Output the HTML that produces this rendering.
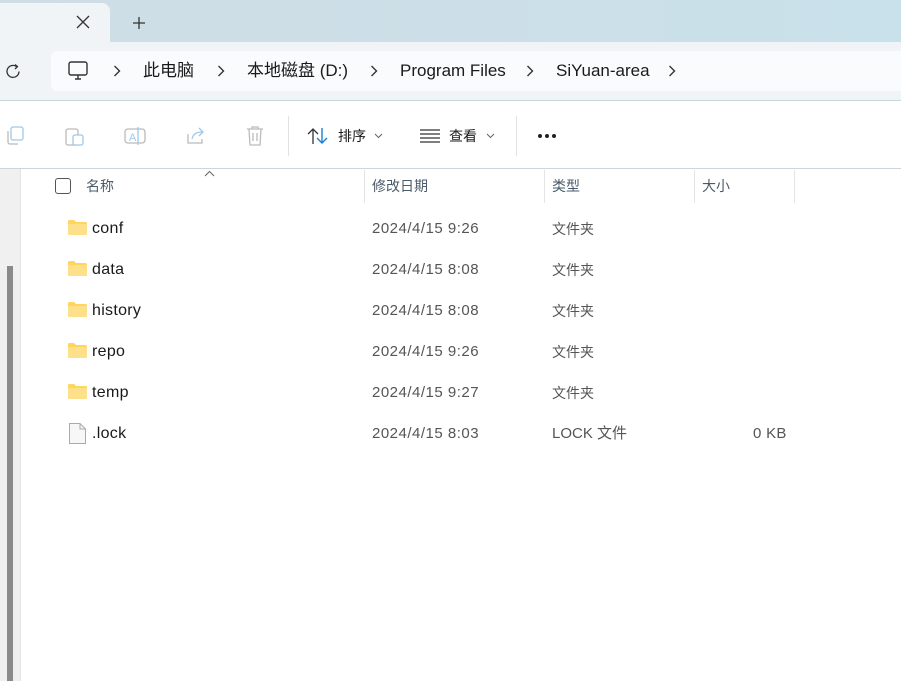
<!DOCTYPE html>
<html><head><meta charset="utf-8"><style>
*{margin:0;padding:0;box-sizing:border-box}
body{width:901px;height:681px;overflow:hidden;background:#fff;font-family:"Liberation Sans","Noto Sans CJK SC",sans-serif;position:relative;color:#1a1a1a}
.abs{position:absolute}
.t{position:absolute;white-space:nowrap;line-height:20px;height:20px}
.n{font-size:16px;letter-spacing:0.3px}
.d{font-size:15px;color:#555;letter-spacing:0.5px}
.c{font-size:14px;color:#555}
</style></head><body>
<div class="abs" style="left:0;top:0;width:901px;height:42px;background:linear-gradient(90deg,#cfdde5,#c9e1ea)"></div>
<div class="abs" style="left:0;top:3px;width:110px;height:40px;background:#f0f4f7;border-radius:0 8px 0 0"></div>
<svg class="abs" style="left:76px;top:15px" width="14" height="14"><path d="M1 1L13 13M13 1L1 13" stroke="#333" stroke-width="1.3"/></svg>
<svg class="abs" style="left:132px;top:16px" width="14" height="14"><path d="M7 1V13M1 7H13" stroke="#333" stroke-width="1.3"/></svg>
<div class="abs" style="left:0;top:42px;width:901px;height:59px;background:#f0f4f7;border-bottom:1px solid #c9d6dc"></div>
<svg class="abs" style="left:5px;top:63px" width="17" height="17"><path d="M14 8.5A6 6 0 1 1 11.5 3.5" fill="none" stroke="#333" stroke-width="1.3"/><path d="M10 1.5L12.5 3.5L10 6" fill="none" stroke="#333" stroke-width="1.3"/></svg>
<div class="abs" style="left:51px;top:51px;width:860px;height:40px;background:#f9fbfc;border-radius:6px"></div>
<svg class="abs" style="left:68px;top:61px" width="20" height="20"><rect x="1" y="1" width="18" height="13" rx="2" fill="none" stroke="#333" stroke-width="1.4"/><path d="M7 18H13M10 14V18" stroke="#333" stroke-width="1.4"/></svg>
<svg class="abs" style="left:113px;top:65px" width="8" height="12"><path d="M1.5 1L6.5 6L1.5 11" fill="none" stroke="#333" stroke-width="1.4"/></svg>
<div class="t" style="left:143px;top:61px;font-size:17px">此电脑</div>
<svg class="abs" style="left:217px;top:65px" width="8" height="12"><path d="M1.5 1L6.5 6L1.5 11" fill="none" stroke="#333" stroke-width="1.4"/></svg>
<div class="t" style="left:247px;top:61px;font-size:17px">本地磁盘 (D:)</div>
<svg class="abs" style="left:370px;top:65px" width="8" height="12"><path d="M1.5 1L6.5 6L1.5 11" fill="none" stroke="#333" stroke-width="1.4"/></svg>
<div class="t" style="left:400px;top:61px;font-size:17px">Program Files</div>
<svg class="abs" style="left:526px;top:65px" width="8" height="12"><path d="M1.5 1L6.5 6L1.5 11" fill="none" stroke="#333" stroke-width="1.4"/></svg>
<div class="t" style="left:556px;top:61px;font-size:17px">SiYuan-area</div>
<svg class="abs" style="left:668px;top:65px" width="8" height="12"><path d="M1.5 1L6.5 6L1.5 11" fill="none" stroke="#333" stroke-width="1.4"/></svg>
<!-- toolbar icons -->
<svg class="abs" style="left:5px;top:126px" width="20" height="20"><rect x="6" y="1" width="12" height="13" rx="2" fill="none" stroke="#9fc8e8" stroke-width="1.3"/><path d="M3 5V16a2 2 0 0 0 2 2H13" fill="none" stroke="#bbb" stroke-width="1.3"/></svg>
<svg class="abs" style="left:65px;top:126px" width="20" height="20"><rect x="1" y="3" width="12" height="16" rx="2" fill="none" stroke="#bbb" stroke-width="1.3"/><rect x="8" y="9" width="10" height="10" rx="2" fill="#fff" stroke="#9fc8e8" stroke-width="1.3"/></svg>
<svg class="abs" style="left:124px;top:126px" width="22" height="20"><rect x="1" y="3" width="20" height="14" rx="3" fill="none" stroke="#bbb" stroke-width="1.3"/><text x="5" y="15" font-size="11" fill="#9fc8e8" font-family="Liberation Sans">A</text><path d="M14 1V19" stroke="#9fc8e8" stroke-width="1.3"/></svg>
<svg class="abs" style="left:185px;top:126px" width="22" height="20"><path d="M3 8V17H17V13" fill="none" stroke="#bbb" stroke-width="1.3"/><path d="M7 13C8 8 12 6 17 6M14 2L18 6L14 10" fill="none" stroke="#9fc8e8" stroke-width="1.3"/></svg>
<svg class="abs" style="left:245px;top:125px" width="20" height="22"><path d="M2 4H18M7 4V2H13V4M4 4L5 20H15L16 4M8 8V16M12 8V16" fill="none" stroke="#bbb" stroke-width="1.3"/></svg>
<div class="abs" style="left:288px;top:116px;width:1px;height:40px;background:#e2e2e2"></div>
<svg class="abs" style="left:307px;top:127px" width="22" height="18"><path d="M6 17V2M1 7L6 2L11 7" fill="none" stroke="#333" stroke-width="1.3"/><path d="M15 1V16M10 11L15 16L20 11" fill="none" stroke="#1a7fd6" stroke-width="1.4"/></svg>
<div class="t" style="left:338px;top:126px;font-size:14px">排序</div>
<svg class="abs" style="left:374px;top:133px" width="9" height="6"><path d="M1 1L4.5 4.5L8 1" fill="none" stroke="#666" stroke-width="1"/></svg>
<svg class="abs" style="left:420px;top:129px" width="20" height="14"><path d="M0 1H20M0 5H20M0 9H20M0 13H20" stroke="#333" stroke-width="1.2"/></svg>
<div class="t" style="left:449px;top:126px;font-size:14px">查看</div>
<svg class="abs" style="left:486px;top:133px" width="9" height="6"><path d="M1 1L4.5 4.5L8 1" fill="none" stroke="#666" stroke-width="1"/></svg>
<div class="abs" style="left:516px;top:116px;width:1px;height:40px;background:#e2e2e2"></div>
<svg class="abs" style="left:537px;top:133px" width="22" height="6"><circle cx="3" cy="3" r="2" fill="#222"/><circle cx="10" cy="3" r="2" fill="#222"/><circle cx="17" cy="3" r="2" fill="#222"/></svg>
<div class="abs" style="left:0;top:168px;width:901px;height:1px;background:#c9d6dc"></div>
<!-- left pane -->
<div class="abs" style="left:0;top:169px;width:21px;height:512px;background:#f0f0f0;border-right:1px solid #e4e4e4"></div>
<div class="abs" style="left:7px;top:266px;width:6px;height:415px;background:#8a8a8a"></div>
<!-- header -->
<div class="abs" style="left:55px;top:178px;width:16px;height:16px;border:1px solid #555;border-radius:3px"></div>
<div class="t" style="left:86px;top:176px;font-size:14px;color:#4a5a6a">名称</div>
<svg class="abs" style="left:204px;top:170px" width="11" height="7"><path d="M1 6L5.5 1.5L10 6" fill="none" stroke="#666" stroke-width="1"/></svg>
<div class="abs" style="left:364px;top:170px;width:1px;height:33px;background:#e4e4e4"></div>
<div class="t" style="left:372px;top:176px;font-size:14px;color:#4a5a6a">修改日期</div>
<div class="abs" style="left:544px;top:170px;width:1px;height:33px;background:#e4e4e4"></div>
<div class="t" style="left:552px;top:176px;font-size:14px;color:#4a5a6a">类型</div>
<div class="abs" style="left:694px;top:170px;width:1px;height:33px;background:#e4e4e4"></div>
<div class="t" style="left:702px;top:176px;font-size:14px;color:#4a5a6a">大小</div>
<div class="abs" style="left:794px;top:170px;width:1px;height:33px;background:#e4e4e4"></div>
<!-- rows -->
<svg class="abs" style="left:68px;top:220px" width="19" height="15"><path d="M0 1.5Q0 0 1.5 0H6L8 2H17.5Q19 2 19 3.5V13.5Q19 15 17.5 15H1.5Q0 15 0 13.5Z" fill="#ffd55e"/><path d="M0 4H19V13.5Q19 15 17.5 15H1.5Q0 15 0 13.5Z" fill="#ffe08a"/></svg>
<div class="t n" style="left:92px;top:219px">conf</div>
<svg class="abs" style="left:68px;top:261px" width="19" height="15"><path d="M0 1.5Q0 0 1.5 0H6L8 2H17.5Q19 2 19 3.5V13.5Q19 15 17.5 15H1.5Q0 15 0 13.5Z" fill="#ffd55e"/><path d="M0 4H19V13.5Q19 15 17.5 15H1.5Q0 15 0 13.5Z" fill="#ffe08a"/></svg>
<div class="t n" style="left:92px;top:260px">data</div>
<svg class="abs" style="left:68px;top:302px" width="19" height="15"><path d="M0 1.5Q0 0 1.5 0H6L8 2H17.5Q19 2 19 3.5V13.5Q19 15 17.5 15H1.5Q0 15 0 13.5Z" fill="#ffd55e"/><path d="M0 4H19V13.5Q19 15 17.5 15H1.5Q0 15 0 13.5Z" fill="#ffe08a"/></svg>
<div class="t n" style="left:92px;top:301px">history</div>
<svg class="abs" style="left:68px;top:343px" width="19" height="15"><path d="M0 1.5Q0 0 1.5 0H6L8 2H17.5Q19 2 19 3.5V13.5Q19 15 17.5 15H1.5Q0 15 0 13.5Z" fill="#ffd55e"/><path d="M0 4H19V13.5Q19 15 17.5 15H1.5Q0 15 0 13.5Z" fill="#ffe08a"/></svg>
<div class="t n" style="left:92px;top:342px">repo</div>
<svg class="abs" style="left:68px;top:384px" width="19" height="15"><path d="M0 1.5Q0 0 1.5 0H6L8 2H17.5Q19 2 19 3.5V13.5Q19 15 17.5 15H1.5Q0 15 0 13.5Z" fill="#ffd55e"/><path d="M0 4H19V13.5Q19 15 17.5 15H1.5Q0 15 0 13.5Z" fill="#ffe08a"/></svg>
<div class="t n" style="left:92px;top:383px">temp</div>
<svg class="abs" style="left:69px;top:423px" width="17" height="21"><path d="M0.5 0.5H11L16.5 6V20.5H0.5Z" fill="#f7f7f7" stroke="#aaa"/><path d="M11 0.5V6H16.5" fill="none" stroke="#aaa"/></svg>
<div class="t n" style="left:92px;top:424px">.lock</div>
<div class="t d" style="left:372px;top:219px">2024/4/15 9:26</div>
<div class="t d" style="left:372px;top:260px">2024/4/15 8:08</div>
<div class="t d" style="left:372px;top:301px">2024/4/15 8:08</div>
<div class="t d" style="left:372px;top:342px">2024/4/15 9:26</div>
<div class="t d" style="left:372px;top:383px">2024/4/15 9:27</div>
<div class="t d" style="left:372px;top:424px">2024/4/15 8:03</div>
<div class="t c" style="left:552px;top:219px">文件夹</div>
<div class="t c" style="left:552px;top:260px">文件夹</div>
<div class="t c" style="left:552px;top:301px">文件夹</div>
<div class="t c" style="left:552px;top:342px">文件夹</div>
<div class="t c" style="left:552px;top:383px">文件夹</div>
<div class="t c" style="left:552px;top:424px;font-size:15px">LOCK 文件</div>
<div class="t d" style="left:753px;top:424px;letter-spacing:0.3px">0 KB</div>
</body></html>
